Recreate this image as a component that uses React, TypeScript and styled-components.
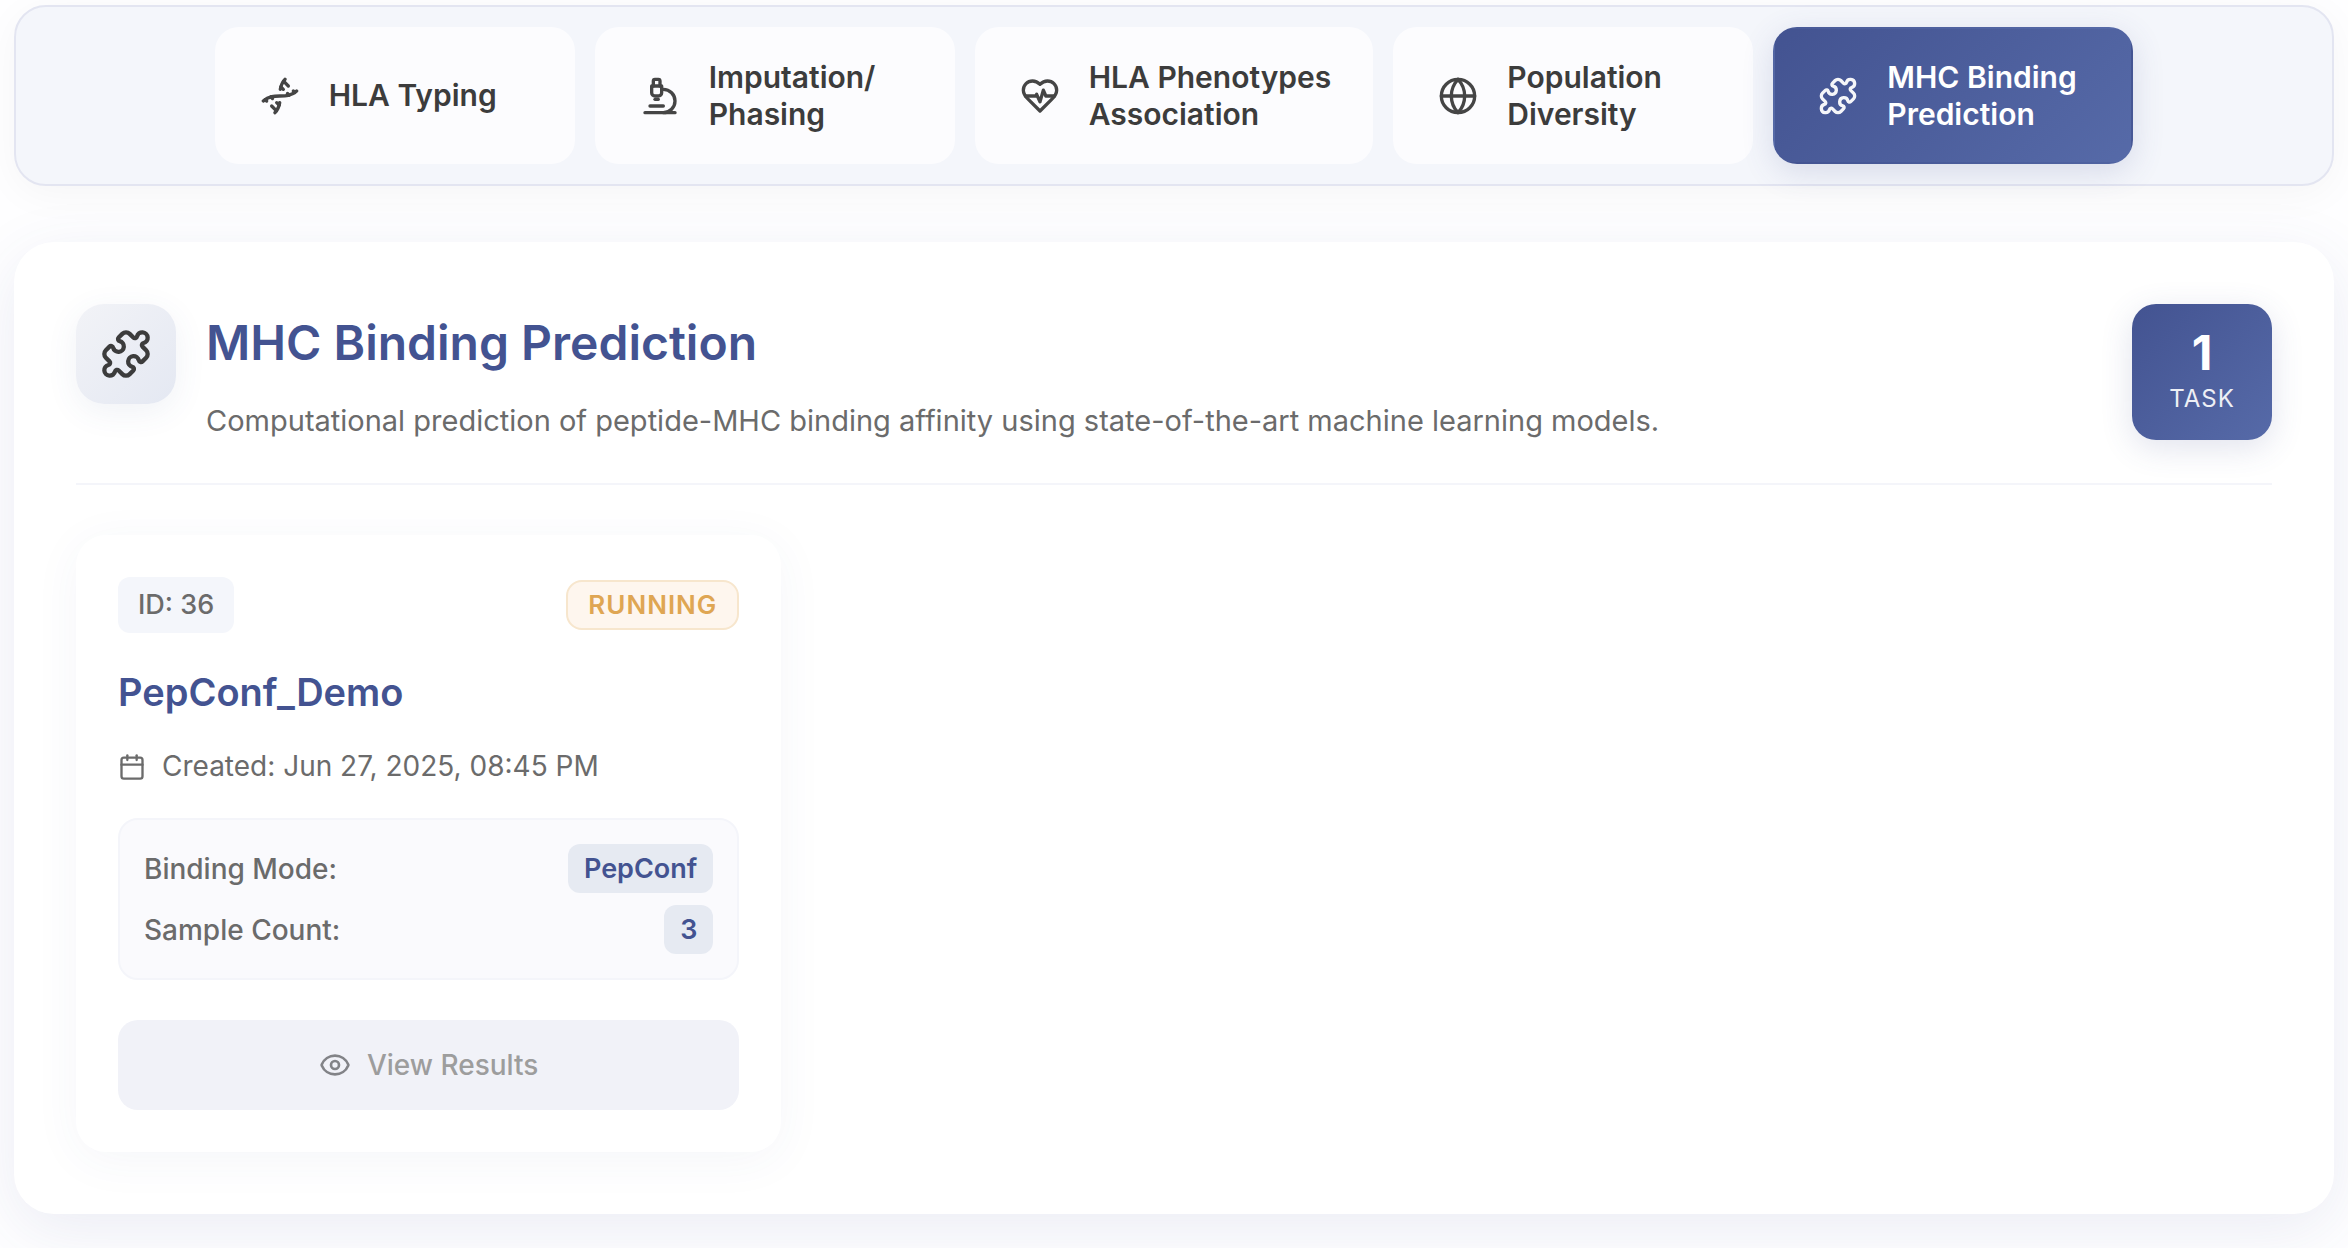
import React, { Fragment, useState } from "react";
import styled, { createGlobalStyle, css } from "styled-components";
import { Calendar, Dna, Eye, Globe, Microscope, Puzzle } from "lucide-react";

const color = {
  brand: "#435391",
  brandLight: "#566aa8",
  ink: "#3c3c3c",
  muted: "#6b6b6b",
  faint: "#9d9d9d",
  surface: "#ffffff",
  tint: "#f4f6fb",
  tintDeep: "#e6eaf2",
  line: "#f4f5fa",
};

const brandGradient = `linear-gradient(135deg, ${color.brand} 0%, ${color.brandLight} 100%)`;

const GlobalStyle = createGlobalStyle`
  *, *::before, *::after { box-sizing: border-box; }
  body {
    margin: 0;
    background: #fefeff;
    color: ${color.ink};
    font-family: Inter, "Liberation Sans", sans-serif;
    font-size: 28px;
  }
  h1, h2, p, dl, dt, dd { margin: 0; }
  button { font: inherit; }
  svg { display: block; flex: none; }
`;

const Page = styled.main`
  display: flex;
  flex-direction: column;
  gap: 56px;
  padding: 5px 14px 34px;
`;

const TabBar = styled.nav`
  display: flex;
  justify-content: center;
  gap: 20px;
  padding: 20px;
  background: ${color.tint};
  border: 2px solid #e3e5f1;
  border-radius: 32px;
  box-shadow: 0 8px 40px rgba(0, 0, 0, 0.04);
`;

const Tab = styled.button<{ $active: boolean }>`
  display: flex;
  align-items: center;
  gap: 26px;
  min-width: 360px;
  min-height: 137px;
  padding: 0 40px;
  border: 2px solid transparent;
  border-radius: 24px;
  background: #fcfcfe;
  color: ${color.ink};
  font-size: 30px;
  font-weight: 600;
  line-height: 37px;
  text-align: left;
  cursor: pointer;

  ${(p) =>
    p.$active &&
    css`
      background: ${brandGradient};
      color: #ffffff;
      box-shadow: 0 8px 32px rgba(67, 83, 145, 0.16);
    `}
`;

const TabIcon = styled.span`
  display: grid;
  place-items: center;
  width: 46px;
  opacity: 0.95;
`;

const Panel = styled.section`
  padding: 62px;
  background: ${color.surface};
  border-radius: 40px;
  box-shadow: 0 16px 64px rgba(67, 83, 145, 0.1);
`;

const PanelHeader = styled.header`
  display: flex;
  align-items: flex-start;
  gap: 30px;
  padding-bottom: 40px;
  margin-bottom: 50px;
  border-bottom: 2px solid ${color.line};
`;

const HeaderIcon = styled.div`
  display: grid;
  place-items: center;
  width: 100px;
  height: 100px;
  border-radius: 28px;
  background: linear-gradient(135deg, #f2f3f7 0%, #e4e8f2 100%);
  box-shadow: 0 8px 32px rgba(67, 83, 145, 0.08);
`;

const HeaderText = styled.div`
  flex: 1;
`;

const Title = styled.h1`
  margin-bottom: 16px;
  color: ${color.brand};
  font-size: 48px;
  font-weight: 600;
  line-height: 78px;
`;

const Description = styled.p`
  color: ${color.muted};
  font-size: 29px;
  line-height: 45px;
`;

const CountBadge = styled.div`
  display: flex;
  flex-direction: column;
  align-items: center;
  width: 140px;
  padding: 20px 0 24px;
  border-radius: 24px;
  background: ${brandGradient};
  color: #ffffff;
  box-shadow: 0 8px 32px rgba(67, 83, 145, 0.16);
`;

const CountNumber = styled.span`
  font-size: 48px;
  font-weight: 700;
  line-height: 58px;
`;

const CountLabel = styled.span`
  font-size: 24px;
  line-height: 34px;
  letter-spacing: 1px;
  opacity: 0.9;
`;

const TaskGrid = styled.div`
  display: grid;
  grid-template-columns: repeat(auto-fill, minmax(640px, 1fr));
  gap: 40px;
`;

const Card = styled.article`
  padding: 42px;
  background: ${color.surface};
  border-radius: 30px;
  box-shadow: 0 8px 48px rgba(67, 83, 145, 0.05);
`;

const CardTop = styled.div`
  display: flex;
  align-items: center;
  justify-content: space-between;
`;

const TaskId = styled.span`
  padding: 8px 20px;
  border-radius: 12px;
  background: ${color.tint};
  color: ${color.muted};
  font-size: 27px;
  font-weight: 500;
  line-height: 40px;
`;

const Status = styled.span`
  padding: 6px 20px;
  border: 2px solid #f7e6cd;
  border-radius: 16px;
  background: #fef6ee;
  color: #dfa653;
  font-size: 26px;
  font-weight: 600;
  line-height: 34px;
  letter-spacing: 1px;
`;

const TaskName = styled.h2`
  margin-top: 32px;
  color: ${color.brand};
  font-size: 38px;
  font-weight: 600;
  line-height: 54px;
`;

const Created = styled.p`
  display: flex;
  align-items: center;
  gap: 16px;
  margin: 24px 0 28px;
  color: ${color.muted};
  font-size: 28px;
  line-height: 47px;
`;

const Details = styled.dl`
  display: flex;
  flex-direction: column;
  gap: 12px;
  padding: 24px;
  border: 2px solid ${color.line};
  border-radius: 20px;
  background: #fafafd;
`;

const DetailRow = styled.div`
  display: flex;
  align-items: center;
  justify-content: space-between;
`;

const DetailLabel = styled.dt`
  color: ${color.muted};
  font-weight: 500;
`;

const DetailValue = styled.dd`
  padding: 4px 16px;
  border-radius: 12px;
  background: ${color.tintDeep};
  color: ${color.brand};
  font-size: 27px;
  font-weight: 600;
  line-height: 41px;
`;

const ResultsButton = styled.button`
  display: flex;
  align-items: center;
  justify-content: center;
  gap: 16px;
  width: 100%;
  margin-top: 40px;
  padding: 22px;
  border: 0;
  border-radius: 20px;
  background: #f1f2f8;
  color: ${color.faint};
  font-size: 28px;
  font-weight: 500;
  line-height: 46px;

  svg { color: #828387; }
`;

type IconProps = { size: number };

/* Heart outline with a pointed base and a pulse line across it. */
const HeartPulseIcon = ({ size }: IconProps) => (
  <svg
    width={size}
    height={size}
    viewBox="0 0 24 24"
    fill="none"
    stroke="currentColor"
    strokeWidth={2}
    strokeLinecap="round"
    strokeLinejoin="round"
    aria-hidden="true"
  >
    <path d="M19 14c1.49-1.46 3-3.21 3-5.5A5.5 5.5 0 0 0 16.5 3c-1.76 0-3 .5-4.5 2-1.5-1.5-2.74-2-4.5-2A5.5 5.5 0 0 0 2 8.5c0 2.3 1.5 4.05 3 5.5l7 7Z" />
    <path d="M3.22 12H9.5l.5-1 2 4.5 2-7 1.5 3.5h5.27" />
  </svg>
);

const tabs = [
  { lines: ["HLA Typing"], Icon: Dna },
  { lines: ["Imputation/", "Phasing"], Icon: Microscope },
  { lines: ["HLA Phenotypes", "Association"], Icon: HeartPulseIcon },
  { lines: ["Population", "Diversity"], Icon: Globe },
  { lines: ["MHC Binding", "Prediction"], Icon: Puzzle },
];

const task = {
  id: 36,
  status: "RUNNING",
  name: "PepConf_Demo",
  created: "Jun 27, 2025, 08:45 PM",
  details: [
    ["Binding Mode:", "PepConf"],
    ["Sample Count:", "3"],
  ],
};

export default function App() {
  const [active, setActive] = useState(4);

  return (
    <>
      <GlobalStyle />
      <Page>
        <TabBar>
          {tabs.map(({ lines, Icon }, i) => (
            <Tab key={lines[0]} type="button" $active={i === active} onClick={() => setActive(i)}>
              <TabIcon>
                <Icon size={40} />
              </TabIcon>
              <span>
                {lines.map((line, n) => (
                  <Fragment key={line}>
                    {n > 0 && <br />}
                    {line}
                  </Fragment>
                ))}
              </span>
            </Tab>
          ))}
        </TabBar>

        <Panel>
          <PanelHeader>
            <HeaderIcon>
              <Puzzle size={52} />
            </HeaderIcon>
            <HeaderText>
              <Title>MHC Binding Prediction</Title>
              <Description>
                Computational prediction of peptide-MHC binding affinity using state-of-the-art
                machine learning models.
              </Description>
            </HeaderText>
            <CountBadge>
              <CountNumber>1</CountNumber>
              <CountLabel>TASK</CountLabel>
            </CountBadge>
          </PanelHeader>

          <TaskGrid>
            <Card>
              <CardTop>
                <TaskId>ID: {task.id}</TaskId>
                <Status>{task.status}</Status>
              </CardTop>
              <TaskName>{task.name}</TaskName>
              <Created>
                <Calendar size={28} />
                <span>Created: {task.created}</span>
              </Created>
              <Details>
                {task.details.map(([label, value]) => (
                  <DetailRow key={label}>
                    <DetailLabel>{label}</DetailLabel>
                    <DetailValue>{value}</DetailValue>
                  </DetailRow>
                ))}
              </Details>
              <ResultsButton type="button" disabled>
                <Eye size={32} />
                View Results
              </ResultsButton>
            </Card>
          </TaskGrid>
        </Panel>
      </Page>
    </>
  );
}
